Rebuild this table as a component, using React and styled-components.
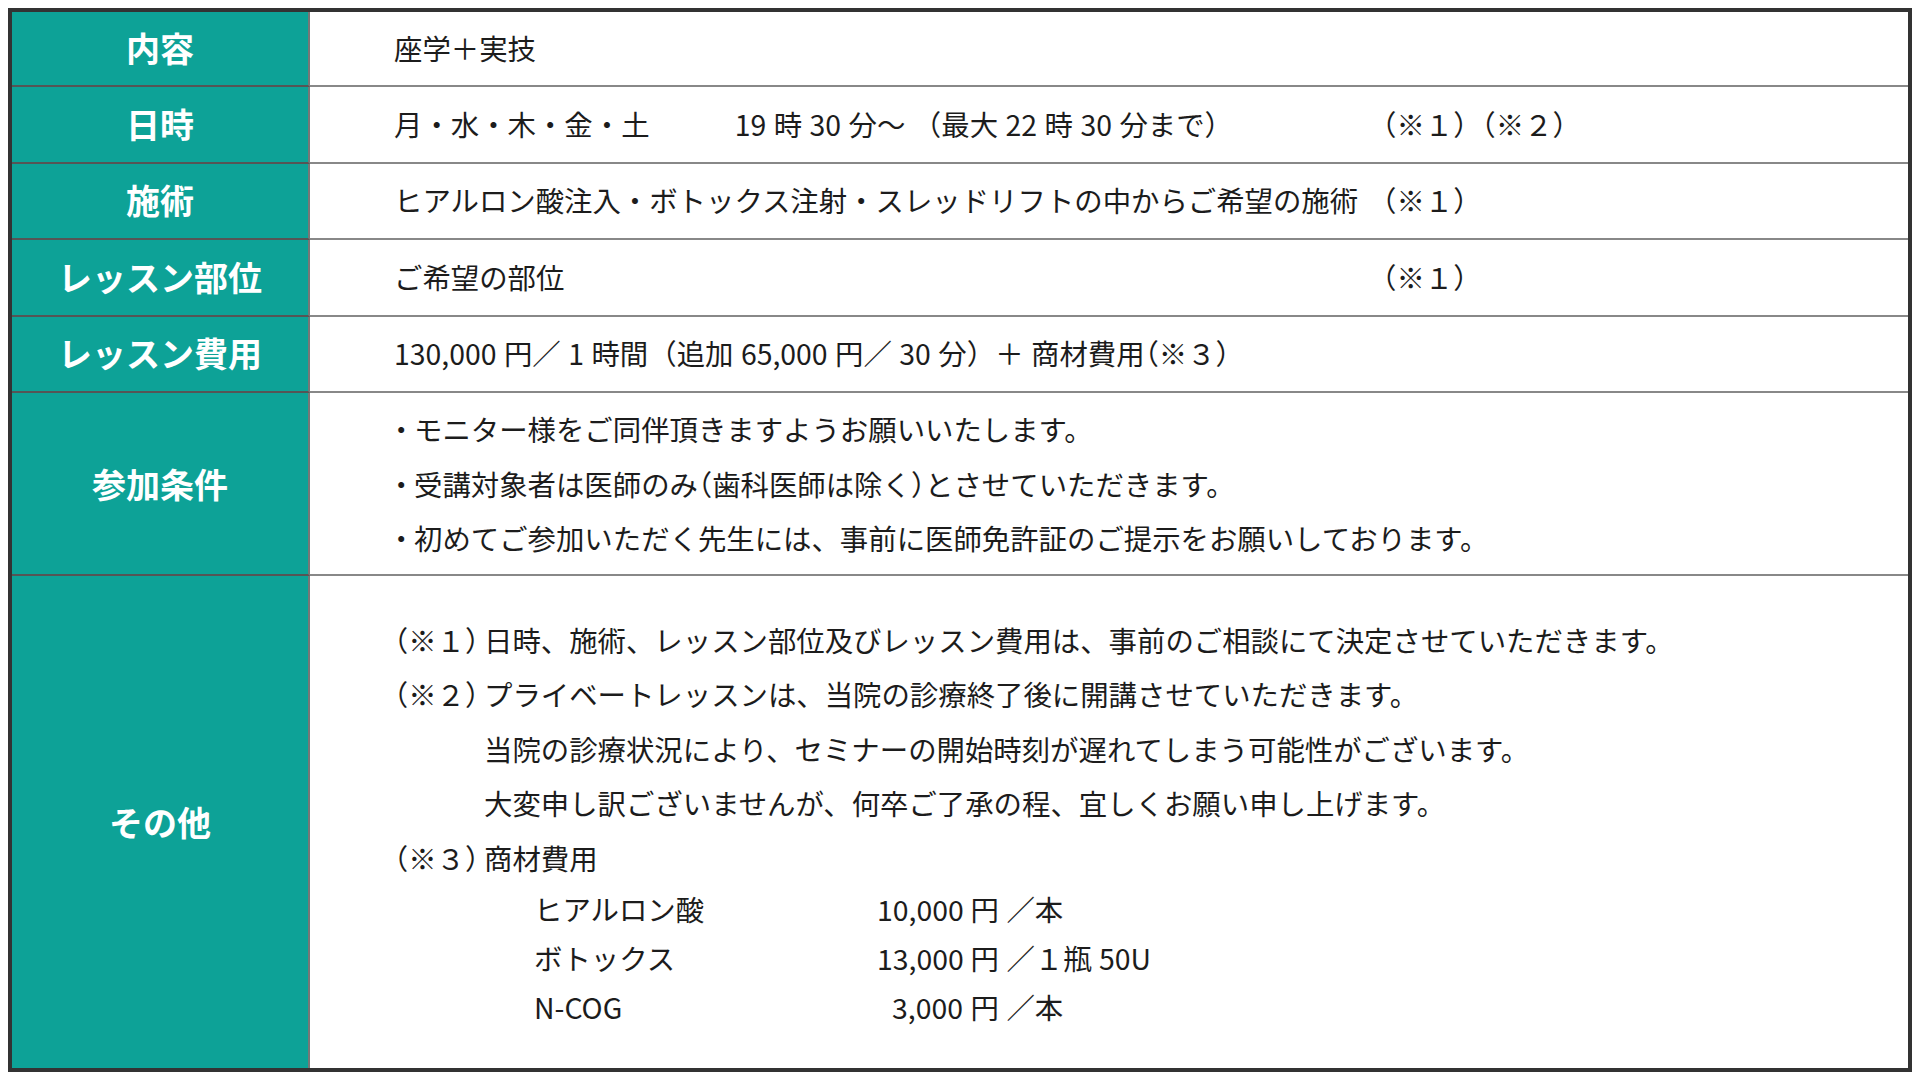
import React from "react";
import styled, { createGlobalStyle } from "styled-components";

const GlobalStyle = createGlobalStyle`
  html, body { background: #ffffff; }
  body {
    margin: 8px;
    font-family: "Noto Sans CJK JP", "Noto Sans", sans-serif;
  }
`;

const Table = styled.div`
  display: grid;
  grid-template-columns: 298px 1fr;
  grid-template-rows: 75px 77px 76px 77px 76px 183px 492px;
  width: 1904px;
  height: 1064px;
  box-sizing: border-box;
  border: 4px solid #333333;
`;

const Head = styled.div`
  display: flex;
  align-items: center;
  justify-content: center;
  padding-bottom: ${(p) => (p.$tall ? "1px" : "3px")};
  background: #0da297;
  color: #ffffff;
  font-weight: 700;
  font-size: 34px;
  border-right: 2px solid #777777;
  border-bottom: ${(p) => (p.$last ? "none" : "2px solid #555555")};
`;

const Cell = styled.div`
  display: flex;
  flex-direction: column;
  justify-content: center;
  padding-left: 84px;
  padding-bottom: ${(p) => (p.$tall ? "1px" : "3px")};
  font-size: 28.4px;
  color: #1c1c1c;
  word-spacing: 0.04em;
  border-bottom: ${(p) => (p.$last ? "none" : "2px solid #888888")};
`;

const Line = styled.div`
  display: flex;
  align-items: center;
  white-space: pre;
  height: ${(p) => p.$h || "auto"};
`;

const MainText = styled.span`
  display: inline-block;
  width: 974px;
`;

const Half = styled.span`
  font-feature-settings: "halt";
`;

const Bullet = styled.span`
  display: inline-block;
  width: 20px;
  font-feature-settings: "halt";
`;

const Label = styled.span`
  display: inline-block;
  width: 90px;
  flex-shrink: 0;
  font-feature-settings: "halt";
`;

const Indent = styled.span`
  display: inline-block;
  width: ${(p) => p.$w}px;
  flex-shrink: 0;
`;

const ProductName = styled.span`
  display: inline-block;
  width: 343px;
`;

const Price = styled.span`
  display: inline-block;
  width: 86px;
  text-align: right;
`;

const rowsTop = [
  { head: "内容", body: "座学＋実技" },
  {
    head: "日時",
    body: "月・水・木・金・土　　　19 時 30 分〜 （最大 22 時 30 分まで）",
    note: "（※１）（※２）",
  },
  {
    head: "施術",
    body: "ヒアルロン酸注入・ボトックス注射・スレッドリフトの中からご希望の施術",
    note: "（※１）",
  },
  { head: "レッスン部位", body: "ご希望の部位", note: "（※１）" },
  {
    head: "レッスン費用",
    body: (
      <>
        130,000 円／ 1 時間（追加 65,000 円／ 30 分）＋ 商材費用<Half>（</Half>※３）
      </>
    ),
  },
];

const conditions = [
  "モニター様をご同伴頂きますようお願いいたします。",
  <>
    受講対象者は医師のみ<Half>（</Half>歯科医師は除く<Half>）</Half>とさせていただきます。
  </>,
  "初めてご参加いただく先生には、事前に医師免許証のご提示をお願いしております。",
];

const products = [
  { name: "ヒアルロン酸", price: "10,000", unit: " 円 ／本" },
  { name: "ボトックス", price: "13,000", unit: " 円 ／１瓶 50U" },
  { name: "N-COG", price: "3,000", unit: " 円 ／本" },
];

export default function App() {
  return (
    <>
      <GlobalStyle />
      <Table>
        {rowsTop.map((r) => (
          <React.Fragment key={r.head}>
            <Head>{r.head}</Head>
            <Cell>
              <Line>
                {r.note ? (
                  <>
                    <MainText>{r.body}</MainText>
                    <span>{r.note}</span>
                  </>
                ) : (
                  <span>{r.body}</span>
                )}
              </Line>
            </Cell>
          </React.Fragment>
        ))}

        <Head $tall>参加条件</Head>
        <Cell $tall>
          {conditions.map((c, i) => (
            <Line key={i} $h="54.5px">
              <Bullet>・</Bullet>
              <span>{c}</span>
            </Line>
          ))}
        </Cell>

        <Head $tall $last>その他</Head>
        <Cell $tall $last>
          <Line $h="54.5px">
            <Label>（※１）</Label>
            <span>日時、施術、レッスン部位及びレッスン費用は、事前のご相談にて決定させていただきます。</span>
          </Line>
          <Line $h="54.5px">
            <Label>（※２）</Label>
            <span>プライベートレッスンは、当院の診療終了後に開講させていただきます。</span>
          </Line>
          <Line $h="54.5px">
            <Indent $w={90} />
            <span>当院の診療状況により、セミナーの開始時刻が遅れてしまう可能性がございます。</span>
          </Line>
          <Line $h="54.5px">
            <Indent $w={90} />
            <span>大変申し訳ございませんが、何卒ご了承の程、宜しくお願い申し上げます。</span>
          </Line>
          <Line $h="54.5px">
            <Label>（※３）</Label>
            <span>商材費用</span>
          </Line>
          {products.map((p) => (
            <Line key={p.name} $h="49px">
              <Indent $w={140} />
              <ProductName>{p.name}</ProductName>
              <Price>{p.price}</Price>
              <span>{p.unit}</span>
            </Line>
          ))}
        </Cell>
      </Table>
    </>
  );
}
